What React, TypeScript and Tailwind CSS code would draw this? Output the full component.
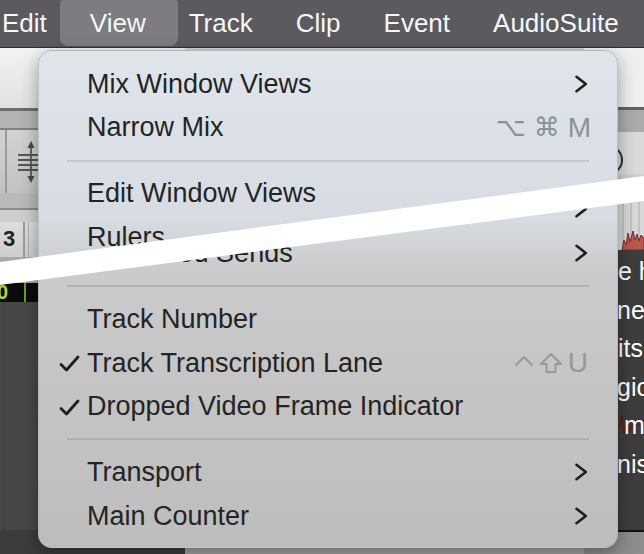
import React from 'react';

const sans = "font-['Liberation_Sans',Arial,sans-serif]";
const glyphs = "font-['DejaVu_Sans','Liberation_Sans',sans-serif]";

function Chevron({ className = '' }: { className?: string }) {
  return (
    <svg width="14" height="18" viewBox="0 0 14 18" className={className}>
      <polyline points="2.5,1.8 11.8,9 2.5,16.2" fill="none" stroke="#1e1e1e" strokeWidth="2.6" strokeLinecap="round" strokeLinejoin="round" />
    </svg>
  );
}

function Check() {
  return (
    <svg width="21" height="17" viewBox="0 0 21 17">
      <polyline points="2,9.5 7.5,15 19,2" fill="none" stroke="#1e1e1e" strokeWidth="2.8" strokeLinecap="round" strokeLinejoin="round" />
    </svg>
  );
}

function ControlKey() {
  return (
    <svg width="20" height="20" viewBox="0 0 20 20">
      <polyline points="2,12 10,4 18,12" fill="none" stroke="#999" strokeWidth="2" strokeLinecap="round" strokeLinejoin="round" />
    </svg>
  );
}

function ShiftKey() {
  return (
    <svg width="24" height="22" viewBox="0 0 24 22">
      <path d="M12 2 L22 12 L16.5 12 L16.5 20 L7.5 20 L7.5 12 L2 12 Z" fill="none" stroke="#999" strokeWidth="2" strokeLinejoin="round" />
    </svg>
  );
}

interface RowProps {
  label: string;
  checked?: boolean;
  right?: React.ReactNode;
  className?: string;
}

function Row({ label, checked, right, className = '' }: RowProps) {
  return (
    <div className={`relative flex h-[44px] items-center pl-[48px] pr-[29px] ${className}`}>
      {checked && (
        <span className="absolute left-[20px] top-[14px]">
          <Check />
        </span>
      )}
      <span className="flex-1 whitespace-nowrap text-[27px] text-[#242424]">{label}</span>
      {right}
    </div>
  );
}

function Separator({ color }: { color: string }) {
  return (
    <div className="flex h-[22px] items-center px-[28px]">
      <div className={`h-[2px] w-full ${color}`} />
    </div>
  );
}

function MenuBar() {
  const items = ['Edit', 'View', 'Track', 'Clip', 'Event', 'AudioSuite'];
  return (
    <div className={`flex h-[48px] items-center gap-[43px] border-b border-[#2f2f31] bg-[#5b5b5f] pl-[2px] text-[26px] text-[#f7f7f7] ${sans}`}>
      {items.map((it) => (
        <div key={it} className="relative flex h-full items-center">
          {it === 'View' && (
            <div className="absolute -left-[30px] -right-[32px] top-0 bottom-[1px] rounded-b-[8px] rounded-t-[3px] bg-[#7c7c81]" />
          )}
          <span className="relative">{it}</span>
        </div>
      ))}
    </div>
  );
}

function LeftPane() {
  return (
    <div className="flex w-[185px] flex-col">
      <div className="h-[60px] bg-[linear-gradient(180deg,#f2f2f2,#e2e2e2)]" />
      <div className="h-[3px] bg-[#6e6e6e]" />
      <div className="h-[17px] bg-[#b4b4b4]" />
      <div className="h-[2px] bg-[#808080]" />
      <div className="flex h-[63px] bg-[linear-gradient(180deg,#d2d2d2,#c2c2c2)]">
        <div className="w-[7px] border-r-2 border-[#9a9a9a]" />
        <div className="flex w-[32px] items-center pl-[9px]">
          <svg width="22" height="50" viewBox="0 0 22 50">
            <path d="M15 4 L18.5 11 L11.5 11 Z" fill="#4a4a4a" />
            <path d="M15 46 L18.5 39 L11.5 39 Z" fill="#4a4a4a" />
            <rect x="14.2" y="11" width="1.6" height="28" fill="#4a4a4a" />
            <rect x="2" y="17" width="20" height="2" fill="#555" />
            <rect x="2" y="22" width="20" height="2" fill="#555" />
            <rect x="2" y="27" width="20" height="2" fill="#555" />
            <rect x="2" y="32" width="20" height="2" fill="#555" />
          </svg>
        </div>
      </div>
      <div className="h-[15px] bg-[#bababa]" />
      <div className="h-[2px] bg-[#8a8a8a]" />
      <div className="h-[12px] bg-[#cfcfcf]" />
      <div className="flex h-[35px] bg-[linear-gradient(180deg,#dedede,#cdcdcd)]">
        <div className={`w-[25px] border-r-2 border-[#9c9c9c] pl-[3px] pt-[4px] text-[22px] font-bold leading-[26px] text-[#222] ${sans}`}>3</div>
        <div className="w-[4px] border-r border-[#b0b0b0]" />
      </div>
      <div className="h-[26px] bg-[#a8a8a8]" />
      <div className="flex h-[19px] bg-[#0b0b0b]">
        <div className={`w-[26px] overflow-hidden border-r-2 border-[#6f9b22] text-[20px] font-bold leading-[19px] text-[#a9d93c] ${sans}`}>
          <span className="-ml-[3px]">0</span>
        </div>
      </div>
      <div className="flex flex-1 bg-[#474747]">
        <div className="w-[5px] border-r border-[#3c3c3c]" />
      </div>
      <div className="h-[24px] bg-[#3c3c3c]" />
    </div>
  );
}

function RightPane() {
  const lines = [
    { t: 'e h', pad: 'pl-[34px]' },
    { t: 'nex', pad: 'pl-[33px]' },
    { t: 'its', pad: 'pl-[34px]' },
    { t: 'gic', pad: 'pl-[33px]' },
    { t: 'm', pad: 'pl-[40px]' },
    { t: 'nis', pad: 'pl-[33px]' },
  ];
  return (
    <div className="flex w-[60px] flex-col">
      <div className="h-[59px] bg-[#efefef]" />
      <div className="h-[3px] bg-[#626262]" />
      <div className="h-[22px] bg-[#ababab]" />
      <div className="h-[42px] bg-[#dadada]">
        <svg width="60" height="42" viewBox="0 0 60 42">
          <circle cx="24" cy="28" r="14" fill="none" stroke="#2e2e2e" strokeWidth="2" />
        </svg>
      </div>
      <div className="h-[26px] bg-[#cfcfcf]" />
      <div className="h-[50px] bg-[repeating-linear-gradient(90deg,#d8d8d8_0px,#d8d8d8_6px,#c2c2c2_6px,#c2c2c2_8px)]">
        <svg width="60" height="50" viewBox="0 0 60 50">
          <path d="M38 50 L40 40 L42 45 L44 33 L46 42 L49 31 L51 40 L53 34 L55 41 L57 35 L60 38 L60 50 Z" fill="#b65a4d" stroke="#7a2b26" strokeWidth="1" />
        </svg>
      </div>
      <div className={`relative flex flex-1 flex-col bg-[#3d3d3d] pt-[2px] text-[25px] leading-[38.5px] text-white ${sans}`}>
        <svg className="absolute left-0 top-[160px]" width="60" height="30" viewBox="0 0 60 30">
          <path d="M30 15 L36 15 L38 6 L40 24 L43 10 L46 20 L49 14 L60 15" fill="none" stroke="#5c1f1f" strokeWidth="2" />
        </svg>
        {lines.map((l) => (
          <div key={l.t} className={`relative whitespace-nowrap ${l.pad}`}>
            {l.t}
          </div>
        ))}
      </div>
      <div className="h-[2px] bg-[#111]" />
      <div className="h-[22px] bg-[#8d8d8d]" />
    </div>
  );
}

function ViewMenu() {
  return (
    <div
      className={`absolute left-[38px] top-[50px] flex h-[498px] w-[580px] flex-col rounded-[14px] border border-[#a9adb2]/60 bg-[linear-gradient(180deg,#e0e5eb_0%,#d7dce2_34%,#cbcbcc_44%,#c4c4c4_70%,#bdbdbd_100%)] pt-[11px] pb-[9px] shadow-[0_6px_18px_rgba(0,0,0,0.35)] ${sans}`}
    >
      <Row label="Mix Window Views" right={<Chevron />} />
      <Row
        label="Narrow Mix"
        right={
          <span className="-mr-[3px] flex items-center gap-[8px] text-[#8b9199]">
            <span className={`${glyphs} text-[26px]`}>⌥</span>
            <span className={`${glyphs} text-[26px]`}>⌘</span>
            <span className="text-[28px]">M</span>
          </span>
        }
      />
      <Separator color="bg-[#c6cad0]" />
      <Row label="Edit Window Views" right={<Chevron className="translate-y-[16px]" />} />
      <div className="h-[16px]">
        <Row label="Rulers" />
      </div>
      <Row
        label="Expanded Sends"
        right={<Chevron />}
        className="[clip-path:polygon(0_26px,100%_-52px,100%_100%,0_100%)]"
      />
      <Separator color="bg-[#b3b3b3]" />
      <Row label="Track Number" />
      <Row
        label="Track Transcription Lane"
        checked
        right={
          <span className="flex items-center gap-[5px] text-[#979797]">
            <ControlKey />
            <ShiftKey />
            <span className="text-[28px]">U</span>
          </span>
        }
      />
      <Row label="Dropped Video Frame Indicator" checked />
      <Separator color="bg-[#aeaeae]" />
      <Row label="Transport" right={<Chevron />} />
      <Row label="Main Counter" right={<Chevron />} />
    </div>
  );
}

export default function App() {
  return (
    <div className="relative h-[554px] w-[644px] overflow-hidden bg-[#3d3d3d]">
      <MenuBar />
      <div className="flex h-[506px]">
        <LeftPane />
        <div className="flex flex-1 flex-col">
          <div className="flex-1 bg-[#cfcfcf]" />
          <div className="h-[24px] bg-[#a3a3a3]" />
        </div>
        <RightPane />
      </div>
      <ViewMenu />
      <svg className="pointer-events-none absolute left-0 top-0" width="644" height="554" viewBox="0 0 644 554">
        <polygon points="0,262 644,176 644,201 0,285" fill="#ffffff" />
      </svg>
    </div>
  );
}
